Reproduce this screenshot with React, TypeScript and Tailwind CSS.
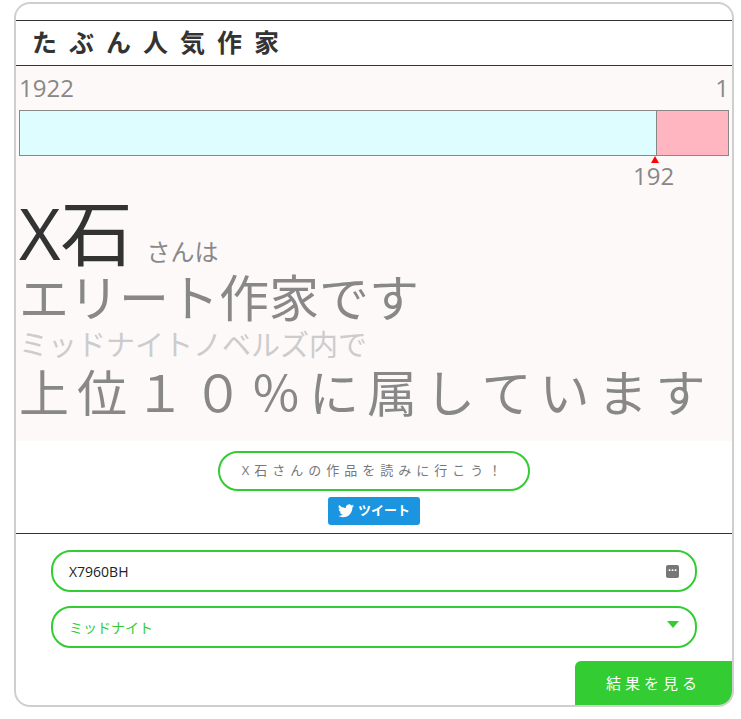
export default function App() {
  const jp = { fontFamily: '"Open Sans","Noto Sans CJK JP",sans-serif' };
  return (
    <div className="bg-white w-[741px] h-[719px] pt-[2px] pl-[14px]" style={jp}>
      <div className="w-[720px] h-[705px] border-2 border-[#cfcfcf] rounded-[16px] overflow-hidden flex flex-col">
        <div className="h-[16px]" />
        <div className="border-t border-b border-[#333] h-[46px] flex items-center pl-[16px]">
          <h1 className="text-[25px] font-bold tracking-[12px] text-[#333]">たぶん人気作家</h1>
        </div>
        <div className="bg-[#fdf9f9] h-[375px] px-[3px] flex flex-col">
          <div className="flex justify-between text-[24px] text-[#888] leading-none mt-[10px]">
            <span>1922</span><span>1</span>
          </div>
          <div className="flex h-[46px] border border-[#888] mt-[10px]">
            <div className="w-[637px] bg-[#ddfdff] border-r border-[#888]" />
            <div className="flex-1 bg-[#ffb6c1]" />
          </div>
          <div className="relative h-[36px]">
            <div className="absolute left-[632px] top-0 w-0 h-0 border-l-[4px] border-r-[4px] border-b-[7px] border-l-transparent border-r-transparent border-b-[#ff0000]" />
            <span className="absolute left-[614px] top-[8px] text-[24px] text-[#888] leading-none">192</span>
          </div>
          <div className="flex items-end leading-none mt-[4px]">
            <span className="text-[72px] text-[#333] leading-[72px]">X石</span>
            <span className="text-[24px] text-[#888] ml-[14px] mb-[4px]">さんは</span>
          </div>
          <div className="text-[50px] text-[#888] leading-[60px]">エリート作家です</div>
          <div className="text-[29px] text-[#ccc] leading-[34px]">ミッドナイトノベルズ内で</div>
          <div className="text-[50px] text-[#888] leading-[62px] tracking-[8px] whitespace-nowrap">上位１０％に属しています</div>
        </div>
        <div className="flex flex-col items-center border-b border-[#333] h-[93px]">
          <button className="mt-[10px] h-[40px] px-[22px] rounded-full border-2 border-[#33cc33] text-[13px] tracking-[5px] text-[#777] bg-white">X石さんの作品を読みに行こう！</button>
          <button className="mt-[6px] h-[28px] px-[10px] rounded-[3px] bg-[#1b95e0] text-white text-[13px] font-bold flex items-center gap-[4px]">
            <svg width="16" height="14" viewBox="0 0 24 20" fill="white"><path d="M24 2.4a9.8 9.8 0 0 1-2.8.8A4.9 4.9 0 0 0 23.3.4a9.9 9.9 0 0 1-3.1 1.2A4.9 4.9 0 0 0 11.8 6 14 14 0 0 1 1.7.9a4.9 4.9 0 0 0 1.5 6.6 4.9 4.9 0 0 1-2.2-.6v.1a4.9 4.9 0 0 0 3.900 4.8 4.9 4.9 0 0 1-2.2.1 4.9 4.9 0 0 0 4.6 3.4A9.9 9.9 0 0 1 0 17.3 14 14 0 0 0 7.5 19.5c9 0 14-7.5 14-14v-.6A10 10 0 0 0 24 2.4z" /></svg>
            ツイート
          </button>
        </div>
        <div className="flex flex-col px-[35px] pt-[16px]">
          <div className="h-[42px] rounded-[20px] border-2 border-[#33cc33] flex items-center justify-between px-[16px] text-[14px] text-[#222]">
            <span>X7960BH</span>
            <span className="w-[13px] h-[13px] rounded-[2px] bg-[#777] text-white text-[8px] leading-[10px] text-center">•••</span>
          </div>
          <div className="mt-[14px] h-[42px] rounded-[20px] border-2 border-[#33cc33] flex items-center justify-between px-[16px] text-[14px] text-[#33cc33]">
            <span>ミッドナイト</span>
            <span className="w-0 h-0 border-l-[6px] border-r-[6px] border-t-[7px] border-l-transparent border-r-transparent border-t-[#33cc33] -mt-[6px]" />
          </div>
        </div>
        <div className="flex justify-end mt-auto">
          <button className="w-[157px] h-[44px] bg-[#33cc33] text-white text-[15px] tracking-[4px] rounded-tl-[6px]">結果を見る</button>
        </div>
      </div>
    </div>
  );
}
